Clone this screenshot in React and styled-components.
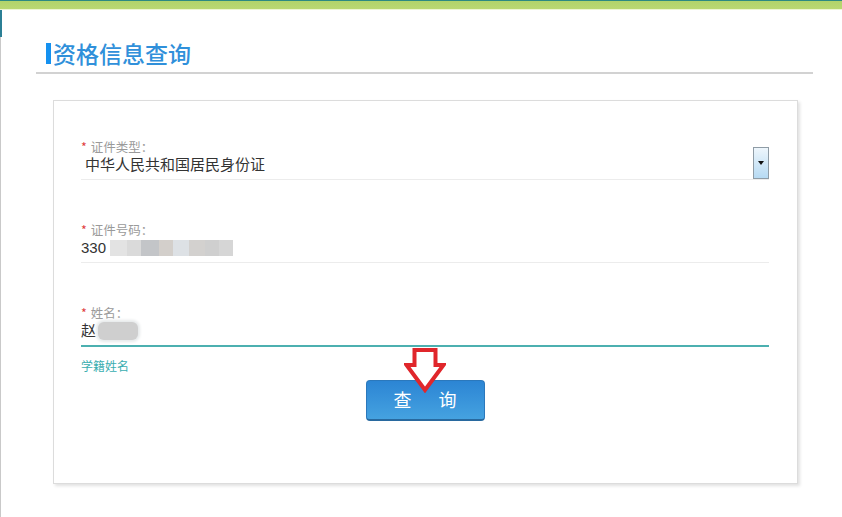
import React from 'react'
import styled, { createGlobalStyle } from 'styled-components'

const Global = createGlobalStyle`
  html, body {
    margin: 0;
    padding: 0;
    background: #fff;
    font-family: "Liberation Sans", "Noto Sans CJK SC", sans-serif;
  }
`

const TopBar = styled.div`
  height: 8px;
  border-top: 1px solid #2d8a82;
  background: linear-gradient(#b2d46a, #bad873);
  border-bottom: 1px solid #eef6d2;
`

const Page = styled.div`
  position: relative;
  border-left: 1px solid #c9c9c9;
  min-height: 507px;
  box-sizing: border-box;
  padding-top: 28px;

  &::before {
    content: "";
    position: absolute;
    left: -1px;
    top: 0;
    width: 2px;
    height: 27px;
    background: #2b7f95;
  }
`

const Header = styled.div`
  margin-left: 35px;
  width: 777px;
  border-bottom: 2px solid #d2d2d2;
  padding: 0 0 4px 10px;
  box-sizing: border-box;
  display: flex;
  align-items: center;
`

const TitleMark = styled.span`
  display: inline-block;
  width: 5px;
  height: 21px;
  background: #1591f0;
  margin-right: 2px;
`

const Title = styled.h1`
  margin: 0;
  font-family: "Noto Sans CJK SC", sans-serif;
  font-weight: 500;
  font-size: 23px;
  line-height: 30px;
  color: #3090da;
`

const Card = styled.div`
  margin: 26px 0 0 52px;
  width: 745px;
  height: 384px;
  box-sizing: border-box;
  border: 1px solid #dcdcdc;
  box-shadow: 2px 2px 3px rgba(0, 0, 0, 0.12);
  padding: 38px 28px 0 27px;
`

const Field = styled.div`
  display: flex;
  align-items: flex-end;
  border-bottom: ${(p) => (p.$active ? '2px solid #4cb0b0' : '1px solid #ececec')};
  margin-bottom: ${(p) => (p.$last ? '0' : '42px')};
`

const FieldBody = styled.div`
  flex: 1;
  padding-bottom: 4px;
`

const Label = styled.div`
  font-family: "Noto Sans CJK SC", sans-serif;
  font-size: 12.5px;
  line-height: 16px;
  color: #9a9a9a;
`

const Star = styled.span`
  color: #e03c3c;
  margin-right: 4px;
`

const Value = styled.div`
  font-family: "Liberation Sans", "Noto Sans CJK SC", sans-serif;
  font-size: 15px;
  line-height: 20px;
  color: #333;
  display: flex;
  align-items: center;
  padding-left: ${(p) => p.$indent || 0}px;
`

const Mosaic = styled.span`
  display: inline-flex;
  margin-left: 4px;
  height: 16px;
`

const Tile = styled.span`
  display: inline-block;
  width: ${(p) => p.$w}px;
  height: 16px;
  background: ${(p) => p.$c};
`

const NameBlur = styled.span`
  display: inline-block;
  margin-left: 2px;
  width: 40px;
  height: 18px;
  border-radius: 6px;
  background: #cfcfcf;
  box-shadow: 0 0 3px 2px #e6e9ea;
`

const DropButton = styled.div`
  width: 14px;
  height: 30px;
  border: 1px solid #8f9ca6;
  background: linear-gradient(#eef6fc, #b6daf3);
  display: flex;
  align-items: center;
  justify-content: center;

  &::after {
    content: "";
    border-left: 3px solid transparent;
    border-right: 3px solid transparent;
    border-top: 4px solid #111;
  }
`

const Help = styled.div`
  margin-top: 12px;
  font-family: "Noto Sans CJK SC", sans-serif;
  font-size: 12px;
  line-height: 14px;
  color: #3aaeb0;
`

const Actions = styled.div`
  display: flex;
  justify-content: center;
  margin-top: 7px;
`

const ButtonWrap = styled.div`
  position: relative;
`

const QueryButton = styled.button`
  width: 119px;
  height: 41px;
  border: 1px solid #2b78bc;
  border-bottom: 2px solid #28699f;
  border-radius: 4px;
  background: linear-gradient(#2c85d4, #45a2e0);
  color: #fff;
  font-family: "Noto Sans CJK SC", sans-serif;
  font-size: 18px;
  display: flex;
  align-items: center;
  justify-content: center;
  gap: 27px;
  padding: 0 0 2px 0;
  cursor: pointer;
`

const Arrow = styled.svg`
  position: absolute;
  left: 38px;
  top: -32px;
  width: 42px;
  height: 45px;
`

const App = () => {
  const tiles = [
    [17, '#e3e3e3'],
    [14, '#dadada'],
    [18, '#c3c5c8'],
    [14, '#d3cfcb'],
    [16, '#dde1e5'],
    [16, '#d3d1cf'],
    [14, '#cfcfcf'],
    [14, '#d6d6d6'],
  ]
  return (
    <>
      <Global />
      <TopBar />
      <Page>
        <Header>
          <TitleMark />
          <Title>资格信息查询</Title>
        </Header>
        <Card>
          <Field>
            <FieldBody>
              <Label><Star>*</Star>证件类型：</Label>
              <Value $indent={4}>中华人民共和国居民身份证</Value>
            </FieldBody>
            <DropButton />
          </Field>
          <Field>
            <FieldBody>
              <Label><Star>*</Star>证件号码：</Label>
              <Value>
                330
                <Mosaic>
                  {tiles.map(([w, c], i) => (
                    <Tile key={i} $w={w} $c={c} />
                  ))}
                </Mosaic>
              </Value>
            </FieldBody>
          </Field>
          <Field $active $last>
            <FieldBody>
              <Label><Star>*</Star>姓名：</Label>
              <Value>
                赵
                <NameBlur />
              </Value>
            </FieldBody>
          </Field>
          <Help>学籍姓名</Help>
          <Actions>
            <ButtonWrap>
              <QueryButton>
                <span>查</span>
                <span>询</span>
              </QueryButton>
              <Arrow viewBox="0 0 42 45">
                <polygon
                  points="10.5,2 31.5,2 31.5,17 39.5,17 21,42 2.5,17 10.5,17"
                  fill="#fff"
                  stroke="#e0262b"
                  strokeWidth="4"
                  strokeLinejoin="miter"
                />
              </Arrow>
            </ButtonWrap>
          </Actions>
        </Card>
      </Page>
    </>
  )
}

export default App
